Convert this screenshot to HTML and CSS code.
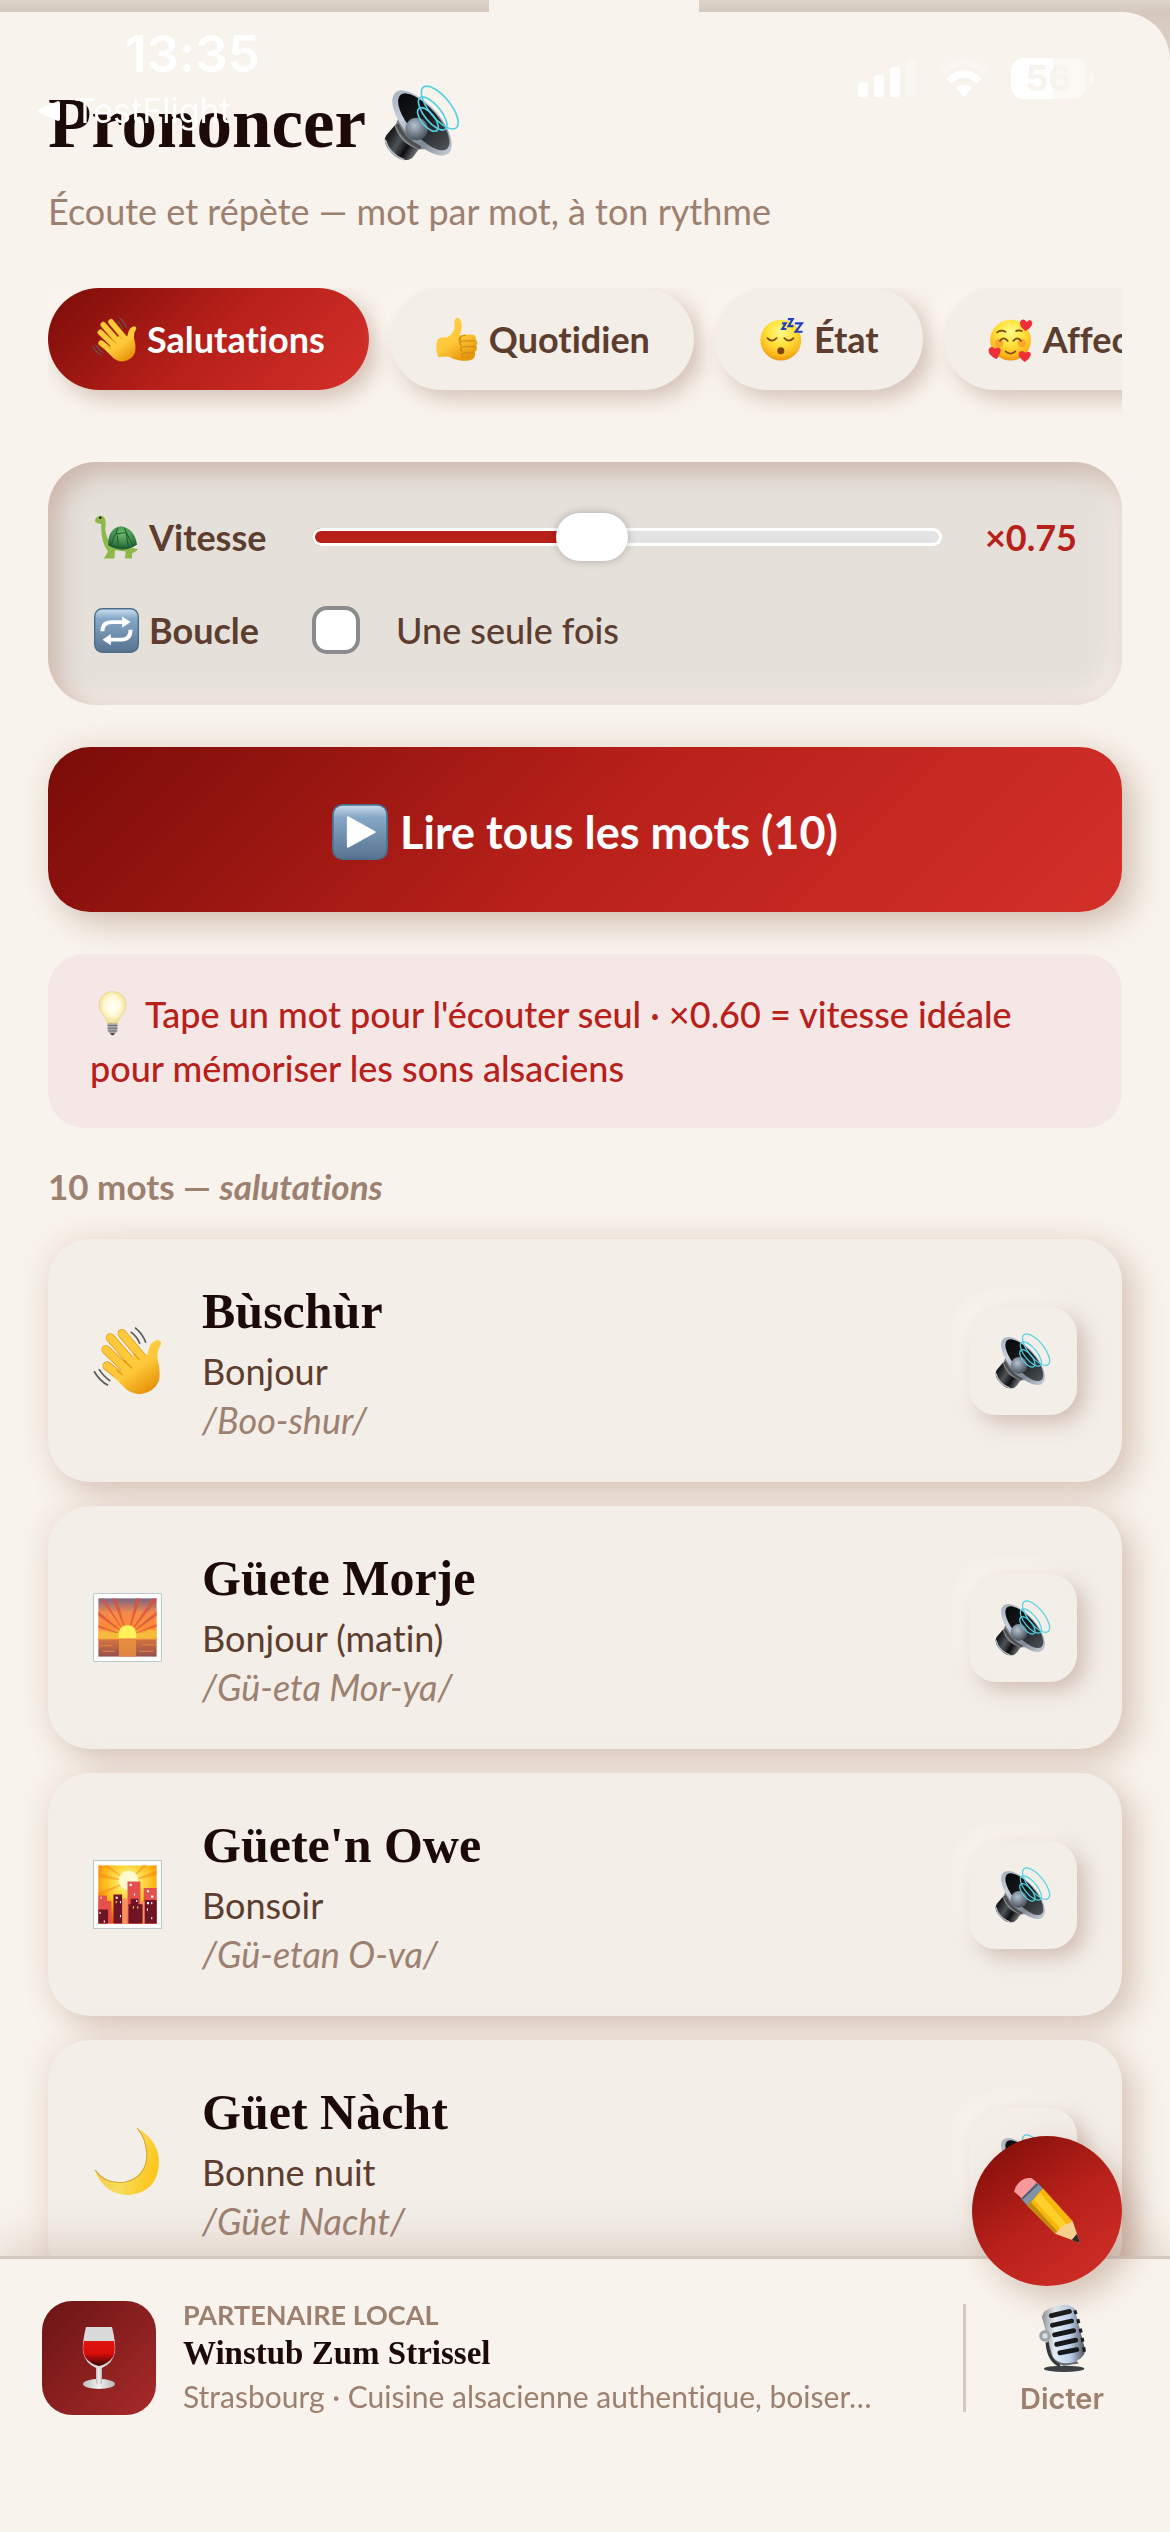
FILE: index.html
```html
<!DOCTYPE html>
<html lang="fr">
<head>
    <meta charset="UTF-8">
    <meta name="viewport" content="width=device-width, initial-scale=1.0">
    <title>Prononcer</title>
    <link rel="stylesheet" href="styles.css">
</head>
<body>
    <!-- Icon sprite -->
    <svg class="sprite" aria-hidden="true">
        <defs>
            <linearGradient id="gSkin" x1="0" y1="0" x2="0.6" y2="1">
                <stop offset="0" stop-color="#ffd04a"/><stop offset="0.6" stop-color="#ffc83a"/><stop offset="1" stop-color="#e8960c"/>
            </linearGradient>
            <radialGradient id="gFace" cx="0.5" cy="0.3" r="0.72">
                <stop offset="0" stop-color="#fffb8c"/><stop offset="0.45" stop-color="#ffe13a"/><stop offset="0.8" stop-color="#fbb81c"/><stop offset="1" stop-color="#e8900c"/>
            </radialGradient>
            <linearGradient id="gBlue" x1="0" y1="0" x2="0" y2="1">
                <stop offset="0" stop-color="#c8dcec"/><stop offset="0.22" stop-color="#86a8c8"/><stop offset="1" stop-color="#587490"/>
            </linearGradient>
            <linearGradient id="gRim" x1="0" y1="0" x2="1" y2="0">
                <stop offset="0" stop-color="#a9b4c2"/><stop offset="0.3" stop-color="#c6d0de"/><stop offset="0.7" stop-color="#7d8795"/><stop offset="1" stop-color="#c3c9d1"/>
            </linearGradient>
            <linearGradient id="gCone" x1="0" y1="0" x2="1" y2="0">
                <stop offset="0" stop-color="#08090a"/><stop offset="0.5" stop-color="#1a1c1f"/><stop offset="1" stop-color="#4c5155"/>
            </linearGradient>
            <linearGradient id="gMagnet" x1="0" y1="0" x2="1" y2="0.6">
                <stop offset="0" stop-color="#7b8085"/><stop offset="0.2" stop-color="#16181a"/><stop offset="0.5" stop-color="#4e5358"/><stop offset="0.75" stop-color="#0d0e10"/><stop offset="1" stop-color="#6b6f73"/>
            </linearGradient>
            <radialGradient id="gDome" cx="0.4" cy="0.35" r="0.65">
                <stop offset="0" stop-color="#b4c2d0"/><stop offset="1" stop-color="#4a535e"/>
            </radialGradient>
            <radialGradient id="gShell" cx="0.5" cy="0.3" r="0.7">
                <stop offset="0" stop-color="#6cc06a"/><stop offset="1" stop-color="#1f6136"/>
            </radialGradient>
            <radialGradient id="gBulb" cx="0.5" cy="0.45" r="0.6">
                <stop offset="0" stop-color="#ffffff"/><stop offset="0.5" stop-color="#fff9d6"/><stop offset="1" stop-color="#ecd778"/>
            </radialGradient>
            <linearGradient id="gDawn" x1="0" y1="0" x2="0" y2="1">
                <stop offset="0" stop-color="#7a6484"/><stop offset="0.25" stop-color="#f58a4c"/><stop offset="0.5" stop-color="#ff8a34"/><stop offset="0.66" stop-color="#f8c040"/><stop offset="0.7" stop-color="#d4743c"/><stop offset="1" stop-color="#965050"/>
            </linearGradient>
            <radialGradient id="gDusk" cx="0.52" cy="0.28" r="0.75">
                <stop offset="0" stop-color="#fffbc0"/><stop offset="0.25" stop-color="#ffe65a"/><stop offset="0.6" stop-color="#ffb414"/><stop offset="1" stop-color="#f04c10"/>
            </radialGradient>
            <linearGradient id="gMoon" x1="0" y1="0" x2="1" y2="0.3">
                <stop offset="0" stop-color="#f0c83c"/><stop offset="0.6" stop-color="#f7dc5c"/><stop offset="1" stop-color="#fcc820"/>
            </linearGradient>
            <linearGradient id="gWine" x1="0" y1="0" x2="0" y2="1">
                <stop offset="0" stop-color="#e01410"/><stop offset="0.5" stop-color="#d80c08"/><stop offset="1" stop-color="#3c0404"/>
            </linearGradient>
            <linearGradient id="gGlass" x1="0" y1="0" x2="1" y2="0">
                <stop offset="0" stop-color="#bdbdbd"/><stop offset="0.5" stop-color="#f2f2f2"/><stop offset="1" stop-color="#b4b4b4"/>
            </linearGradient>
            <linearGradient id="gSteel" x1="0" y1="0" x2="1" y2="0">
                <stop offset="0" stop-color="#8d9196"/><stop offset="0.3" stop-color="#e6edf6"/><stop offset="0.65" stop-color="#bcd0ee"/><stop offset="1" stop-color="#4c4f54"/>
            </linearGradient>
        </defs>

        <symbol id="speaker" viewBox="0 0 64 64">
            <path d="M9 34 2 42Q-1 47 3 53Q9 62 17 63Q22 64 25 60L30 53Z" fill="url(#gMagnet)"/>
            <path d="M1 46Q4 58 17 63" fill="none" stroke="#b8bcc0" stroke-width="1.5"/>
            <path d="M12 28 9 35Q14 50 29 54L46 54Z" fill="#85878a"/>
            <path d="M11 33Q17 47 31 53" fill="none" stroke="#4d4f52" stroke-width="3"/>
            <ellipse cx="32" cy="32" rx="34" ry="15" transform="rotate(49 32 32)" fill="url(#gRim)"/>
            <ellipse cx="33.500" cy="31" rx="30" ry="12" transform="rotate(49 33.500 31)" fill="url(#gCone)"/>
            <circle cx="27.500" cy="37" r="9.500" fill="url(#gDome)"/>
            <g fill="none" stroke="#52d2e4" stroke-width="1.400">
                <ellipse cx="47" cy="19" rx="22" ry="9" transform="rotate(51 47 19)"/>
                <ellipse cx="41" cy="24" rx="17" ry="7" transform="rotate(51 41 24)"/>
                <ellipse cx="37" cy="29" rx="12" ry="5.500" transform="rotate(51 37 29)"/>
            </g>
        </symbol>

        <symbol id="wave" viewBox="0 0 64 64">
            <g stroke="#e09a14" stroke-width="8.400" stroke-linecap="round">
                <path d="M13 37 32 52M12 22 34 43M16 11 38 36M27 7 48 32"/>
            </g>
            <g stroke="#ffc93c" stroke-width="7" stroke-linecap="round">
                <path d="M13 37 32 52M12 22 34 43M16 11 38 36M27 7 48 32"/>
            </g>
            <path d="M25 43 38 27 45 26Q50 31 51 24Q53 14 60 13Q65 14 62 19Q59 23 60 31Q63 43 61 51Q57 61 45 63Q38 64 31 59L19 47Z" fill="url(#gSkin)"/>
            <path d="M29 32 36 39M27 45 22 41M38 26 43 31" stroke="#e09a14" stroke-width="1.200" stroke-linecap="round"/>
            <path d="M39 1.500Q46 7 49 15.500M35 5.500Q41 10 43.500 16.500M1 42Q6 51 14 55M5.500 40Q10 47 16 51" fill="none" stroke="#5c5c5c" stroke-width="1.600"/>
        </symbol>

        <symbol id="thumb" viewBox="0 0 64 64">
            <path d="M5 32Q10 28 18 29Q27 25 29 16L29 5Q31-1 36 2Q41 7 39 17L37 26Q42 27 44 25H55Q61 27 59 32Q64 36 60 41Q63 46 58 50Q60 56 55 60Q47 64 34 61Q27 60 21 56L6 57Q1 45 5 32Z" fill="url(#gSkin)"/>
            <path d="M38 33Q35 26 45 26M39 41Q33 34 44 34H59M40 49Q34 43 43 42H60M42 57Q36 52 44 51H58M38 28Q34 31 37 36" fill="none" stroke="#d68c12" stroke-width="1.800"/>
        </symbol>

        <symbol id="sleepy" viewBox="0 0 64 64">
            <circle cx="31" cy="33" r="29" fill="url(#gFace)"/>
            <path d="M12 30Q18 37 25 30M36 30Q43 37 49 30" fill="none" stroke="#7a4510" stroke-width="2.500" stroke-linecap="round"/>
            <ellipse cx="31" cy="48" rx="5" ry="5" fill="#7a4510"/>
            <path d="M33 9H38L33 17H39M41 3H48L42 13H49M51 9H61L52 21H62" fill="none" stroke="#1f3fc4" stroke-width="3"/>
        </symbol>

        <symbol id="hearts" viewBox="0 0 64 64">
            <circle cx="32" cy="33" r="29" fill="url(#gFace)"/>
            <circle cx="16" cy="37" r="6" fill="#f77a2c" opacity="0.5"/><circle cx="48" cy="37" r="6" fill="#f77a2c" opacity="0.5"/>
            <path d="M17 34Q22 27 28 34M36 34Q42 27 47 34M25 49Q32 55 39 49M13 22Q18 17 25 21M40 20Q44 18 48 20" fill="none" stroke="#7a4510" stroke-width="2.400" stroke-linecap="round"/>
            <g fill="#ee2f38">
                <path d="M53 20Q43 12 46 6Q50 1 55 7Q61 1 63 8Q63 15 53 20Z"/>
                <path d="M12 60Q-1 53 1 46Q4 40 10 45Q17 41 18 47Q18 53 12 60Z"/>
                <path d="M52 64Q42 57 44 51Q48 46 53 51Q60 47 61 53Q60 59 52 64Z"/>
            </g>
        </symbol>

        <symbol id="turtle" viewBox="0 0 64 64">
            <path d="M3 4Q8-1 14 3Q18 7 16 19Q17 33 24 42L52 46 63 49 54 55V62H44L45 52 30 50 29 62H14L20 52Q10 40 10 13L3 11Q0 8 3 4Z" fill="#8fb84a"/>
            <path d="M20 43Q20 19 38 16Q58 19 61 42Q42 56 20 43Z" fill="url(#gShell)"/>
            <path d="M25 42Q27 32 31 27L46 25 55 43M31 27 34 18M46 25 43 18M33 29 35 46 49 46 46 27M21 41Q42 53 61 41" fill="none" stroke="#1f5c30" stroke-width="1.500"/>
            <circle cx="9" cy="4" r="1.800" fill="#222"/>
        </symbol>

        <symbol id="repeat" viewBox="0 0 64 64">
            <rect width="64" height="64" rx="12" fill="#4c6c8c"/>
            <rect x="2" y="2" width="60" height="60" rx="10" fill="url(#gBlue)"/>
            <path d="M12 33Q12 20 25 20H43M52 31Q52 45 39 45H22" fill="none" stroke="#fff" stroke-width="5.500"/>
            <path d="M40 12 52 20 40 28ZM24 37 12 45 24 53Z" fill="#fff"/>
        </symbol>

        <symbol id="play" viewBox="0 0 64 64">
            <rect width="64" height="64" rx="12" fill="#4c6c8c"/>
            <rect x="2" y="2" width="60" height="60" rx="10" fill="url(#gBlue)"/>
            <path d="M18 15 49 32 18 49Z" fill="#fff" stroke="#fff" stroke-width="2" stroke-linejoin="round"/>
        </symbol>

        <symbol id="bulb" viewBox="0 0 64 64">
            <path d="M32 1C19 1 13 10 13 20C13 32 23 36 25 46H39C41 36 51 32 51 20C51 10 45 1 32 1Z" fill="url(#gBulb)" stroke="#e6d084" stroke-width="1"/>
            <path d="M25 46H39V57L36 60H28L25 57Z" fill="#a8a8a8"/>
            <path d="M25 49H39M25 53H39M26 57H38" stroke="#6f6f6f" stroke-width="1.500"/>
            <path d="M28 60H36L33 63H31Z" fill="#333"/>
        </symbol>

        <symbol id="sunrise" viewBox="0 0 64 64">
            <rect x="0.500" y="0.500" width="63" height="63" rx="1" fill="#fff" stroke="#bcc8ca"/>
            <rect x="5" y="5" width="54" height="54" fill="url(#gDawn)"/>
            <path d="M32 40 18 5H22ZM32 40 5 17V21ZM32 40 5 30V32ZM32 40 7 5H10ZM32 40 40 5H44ZM32 40 55 5H59V7ZM32 40 59 17V21ZM32 40 59 29V31Z" fill="#d8503c" opacity="0.75"/>
            <path d="M5 36 12 35 16 37H48L52 34 59 35V43H5Z" fill="#f8bc3c"/>
            <path d="M24 42Q23 30 32 30Q41 30 40 42Z" fill="#fff25a"/>
            <rect x="24" y="43" width="16" height="16" fill="#f09440" opacity="0.8"/>
            <path d="M5 43H59M5 49H18M45 48H59M9 54H20M43 54H56" stroke="#e88440" stroke-width="1"/>
        </symbol>

        <symbol id="sunset" viewBox="0 0 64 64">
            <rect x="0.500" y="0.500" width="63" height="63" fill="#fff" stroke="#bcc8ca"/>
            <rect x="5" y="5" width="54" height="54" fill="url(#gDusk)"/>
            <path d="M33 20 5 12V16ZM33 20 10 5H14ZM33 20 46 5H50ZM33 20 5 30V34ZM33 20 59 10V14Z" fill="#f88410" opacity="0.5"/>
            <circle cx="33" cy="19" r="9" fill="#fffbd0"/>
            <path d="M5 33H13V38H17V59H5ZM32 20H44V59H32ZM47 26H59V59H47Z" fill="#e4504c"/>
            <path d="M27 36H32V59H27ZM44 38H48V59H44Z" fill="#f89060"/>
            <path d="M5 46H14V59H5ZM19 32H27V59H19ZM33 41H35V36H42V41H46V59H33ZM48 37H59V59H48Z" fill="#6e1424"/>
            <path d="M21 34H23V36H21ZM25 38H26V40H25ZM34 22H36V24H34ZM38 31H39V33H38ZM40 37H41V39H40ZM50 28H52V30H50ZM50 39H52V41H50ZM54 33H56V35H54ZM54 39H55V41H54ZM50 45H51V47H50ZM54 53H55V55H54ZM6 48H7V50H6ZM25 51H26V53H25ZM10 56H11V58H10ZM7 34H8V36H7Z" fill="#fff"/>
            <path d="M37 43H38V45H37ZM41 43H42V45H41ZM21 38H22V40H21Z" fill="#ffe040"/>
        </symbol>

        <symbol id="moon" viewBox="0 0 64 64">
            <path d="M41 1Q63 14 61 36Q59 60 34 63Q10 63 2 40Q12 54 30 51Q50 46 50 25Q49 10 41 1Z" fill="url(#gMoon)"/>
            <path d="M2 40Q12 54 30 51Q50 46 50 25Q49 10 41 1" fill="none" stroke="#dba52c" stroke-width="1"/>
        </symbol>

        <symbol id="pencil" viewBox="0 0 64 64">
            <path d="M2 8Q8-1 17 0L22 4 8 20 0 13Z" fill="#f79a9e"/>
            <path d="M22 4 28 10 13 27 7 20Z" fill="#7f93a8"/>
            <path d="M8 20 23 6" stroke="#4c5560" stroke-width="1.500"/>
            <path d="M28 10 57 42 46 55 40 54 13 27Z" fill="#f9b60c"/>
            <path d="M25 14 52 46 46 50 19 21Z" fill="#ffd02c"/>
            <path d="M16 23 44 54 40 54 13 27Z" fill="#c08a10"/>
            <path d="M57 42 64 63 40 54 46 47Z" fill="#f6d08c"/>
            <path d="M61 54 64 63 56 60Z" fill="#2a2a2e"/>
        </symbol>

        <symbol id="wine" viewBox="0 0 64 64">
            <ellipse cx="32" cy="58" rx="16" ry="5" fill="url(#gGlass)"/>
            <path d="M29 41H35V57Q32 60 29 57Z" fill="url(#gGlass)"/>
            <path d="M19 1H45Q49 17 48 26Q46 37 35 42H29Q18 37 16 26Q15 17 19 1Z" fill="#dadada"/>
            <path d="M17 15H47Q49 24 46 31Q41 38 32 40Q23 38 18 31Q15 24 17 15Z" fill="url(#gWine)"/>
        </symbol>

        <symbol id="mic" viewBox="0 0 64 64">
            <ellipse cx="34" cy="61" rx="19" ry="3" fill="#3c3f43"/>
            <path d="M18 32Q20 55 34 58L48 56 40 48Z" fill="#6b6e72"/>
            <path d="M13 12Q14 5 26 2Q40-1 44 5L54 44Q52 52 42 55Q28 58 23 49Z" fill="url(#gSteel)"/>
            <path d="M44 6Q50 22 53 45" stroke="#1c1e20" stroke-width="3" stroke-dasharray="4 5" fill="none"/>
            <g stroke="#17181a" stroke-width="4.500" stroke-linecap="round">
                <path d="M22 11 39 7M23 20 41 16M25 29 43 25M27 38 45 34M30 46 46 43"/>
            </g>
            <circle cx="16" cy="30" r="5.500" fill="#9fa4aa"/><circle cx="16" cy="30" r="2.500" fill="#d8dee6"/>
            <path d="M18 36Q19 53 30 58" stroke="#34373a" stroke-width="3" fill="none"/>
        </symbol>
    </svg>

    <div class="app">
        <div class="notch"></div>

        <div class="status-bar">
            <div class="status-left">
                <span class="clock">13:35</span>
                <span class="back-app">
                    <svg class="back-arrow" viewBox="0 0 22 20"><path d="M20 0Q22 0 22 2V18Q22 20 20 20L1 11.500Q-1 10 1 8.500Z" fill="#fff"/></svg>
                    TestFlight
                </span>
            </div>
            <div class="status-right">
                <svg class="signal" viewBox="0 0 60 40" fill="#fff">
                    <rect x="0" y="24" width="10" height="15" rx="3"/>
                    <rect x="16" y="17" width="10" height="22" rx="3"/>
                    <rect x="32" y="9" width="10" height="30" rx="3"/>
                    <rect x="48" y="1" width="10" height="38" rx="3" opacity="0.3"/>
                </svg>
                <svg class="wifi" viewBox="0 0 50 40">
                    <path d="M3 14Q25-6 47 14" fill="none" stroke="#fff" stroke-width="7" opacity="0.3"/>
                    <path d="M10 23Q25 9 40 23" fill="none" stroke="#fff" stroke-width="7"/>
                    <path d="M17 30Q25 23 33 30L25 39Z" fill="#fff"/>
                </svg>
                <span class="battery">56</span>
            </div>
        </div>

        <main class="sheet">
            <h1>Prononcer <svg class="title-icon"><use href="#speaker"/></svg></h1>
            <p class="subtitle">Écoute et répète — mot par mot, à ton rythme</p>

            <div class="chips">
                <button class="chip active"><svg class="icon"><use href="#wave"/></svg>Salutations</button>
                <button class="chip"><svg class="icon"><use href="#thumb"/></svg>Quotidien</button>
                <button class="chip"><svg class="icon"><use href="#sleepy"/></svg>État</button>
                <button class="chip"><svg class="icon"><use href="#hearts"/></svg>Affection</button>
            </div>

            <section class="settings">
                <div class="setting-row">
                    <label class="setting-label" for="speed"><svg class="icon"><use href="#turtle"/></svg>Vitesse</label>
                    <input type="range" id="speed" min="0.4" max="1.2" step="0.05" value="0.75">
                    <span class="speed-value">×0.75</span>
                </div>
                <div class="setting-row">
                    <label class="setting-label" for="loop"><svg class="icon"><use href="#repeat"/></svg>Boucle</label>
                    <input type="checkbox" id="loop">
                    <span class="loop-text">Une seule fois</span>
                </div>
            </section>

            <button class="play-all"><svg class="play-icon"><use href="#play"/></svg>Lire tous les mots (10)</button>

            <p class="tip"><svg class="icon"><use href="#bulb"/></svg>Tape un mot pour l'écouter seul · ×0.60 = vitesse idéale pour mémoriser les sons alsaciens</p>

            <h2>10 mots — <em>salutations</em></h2>

            <ul class="words">
                <li class="word">
                    <svg class="word-icon"><use href="#wave"/></svg>
                    <div class="word-text">
                        <h3>Bùschùr</h3>
                        <p class="translation">Bonjour</p>
                        <p class="phonetic">/Boo-shur/</p>
                    </div>
                    <button class="listen" aria-label="Écouter Bùschùr"><svg><use href="#speaker"/></svg></button>
                </li>
                <li class="word">
                    <svg class="word-icon"><use href="#sunrise"/></svg>
                    <div class="word-text">
                        <h3>Güete Morje</h3>
                        <p class="translation">Bonjour (matin)</p>
                        <p class="phonetic">/Gü-eta Mor-ya/</p>
                    </div>
                    <button class="listen" aria-label="Écouter Güete Morje"><svg><use href="#speaker"/></svg></button>
                </li>
                <li class="word">
                    <svg class="word-icon"><use href="#sunset"/></svg>
                    <div class="word-text">
                        <h3>Güete'n Owe</h3>
                        <p class="translation">Bonsoir</p>
                        <p class="phonetic">/Gü-etan O-va/</p>
                    </div>
                    <button class="listen" aria-label="Écouter Güete'n Owe"><svg><use href="#speaker"/></svg></button>
                </li>
                <li class="word">
                    <svg class="word-icon"><use href="#moon"/></svg>
                    <div class="word-text">
                        <h3>Güet Nàcht</h3>
                        <p class="translation">Bonne nuit</p>
                        <p class="phonetic">/Güet Nacht/</p>
                    </div>
                    <button class="listen" aria-label="Écouter Güet Nàcht"><svg><use href="#speaker"/></svg></button>
                </li>
            </ul>
        </main>

        <footer class="bottom-bar">
            <button class="fab" aria-label="Écrire"><svg><use href="#pencil"/></svg></button>
            <a class="partner" href="#partenaire">
                <span class="partner-logo"><svg><use href="#wine"/></svg></span>
                <span class="partner-text">
                    <span class="partner-tag">PARTENAIRE LOCAL</span>
                    <span class="partner-name">Winstub Zum Strissel</span>
                    <span class="partner-desc">Strasbourg · Cuisine alsacienne authentique, boiser…</span>
                </span>
            </a>
            <button class="dictate"><svg><use href="#mic"/></svg>Dicter</button>
        </footer>
    </div>
</body>
</html>
```
FILE: styles.css
```css
* {
    box-sizing: border-box;
}
body {
    margin: 0;
    font-family: Lato, "Open Sans", sans-serif;
    font-size: 36px;
    font-variant-ligatures: none;
    color: #5c3d2e;
    background-color: #f8f3ec;
}
h1, h2, h3, p, ul {
    margin: 0;
    padding: 0;
}
button {
    font-family: inherit;
    font-variant-ligatures: inherit;
    border: none;
    cursor: pointer;
}
.sprite {
    position: absolute;
    width: 0;
    height: 0;
}
.app {
    position: relative;
    display: flex;
    flex-direction: column;
    height: 100vh;
    padding-top: 12px;
    overflow: hidden;
    background: linear-gradient(to bottom, #dfd4cb 0, #d5c8be 12px, #ddd3cc 60px);
}

/* Phone status bar, floats over the sheet */
.notch {
    position: absolute;
    top: 0;
    left: 489px;
    width: 210px;
    height: 12px;
    background-color: #f8f3ec;
}
.status-bar {
    position: absolute;
    top: 24px;
    left: 38px;
    right: 76px;
    z-index: 2;
    display: flex;
    justify-content: space-between;
    color: #fff;
    font-family: Inter, sans-serif;
    pointer-events: none;
}
.status-left {
    display: flex;
    flex-direction: column;
}
.clock {
    padding-left: 87px;
    font-size: 51px;
    line-height: 60px;
    font-weight: 600;
}
.back-app {
    display: flex;
    align-items: center;
    gap: 14px;
    font-size: 34px;
    line-height: 54px;
}
.back-arrow {
    width: 22px;
    height: 20px;
}
.status-right {
    display: flex;
    align-items: center;
    height: 42px;
    margin-top: 33px;
}
.signal {
    width: 60px;
    height: 40px;
    margin-right: 21px;
}
.wifi {
    width: 50px;
    height: 40px;
    margin-right: 22px;
}
.battery {
    position: relative;
    width: 75px;
    height: 41px;
    margin-right: 8px;
    border-radius: 13px;
    background: linear-gradient(to right, #fff 56%, #fbf9f4 56%);
    color: #f8f3ec;
    font-size: 36px;
    line-height: 41px;
    font-weight: 700;
    text-align: center;
}
.battery::after {
    content: "";
    position: absolute;
    top: 14px;
    right: -8px;
    width: 5px;
    height: 13px;
    border-radius: 0 5px 5px 0;
    background-color: #fbf9f4;
}

.sheet {
    flex: 1;
    min-height: 0;
    padding: 71px 48px 24px;
    overflow-y: auto;
    scrollbar-width: none;
    background-color: #f8f3ec;
    border-top-right-radius: 48px;
}
h1 {
    display: flex;
    align-items: center;
    gap: 18px;
    font-family: "Liberation Serif", serif;
    font-size: 71px;
    line-height: 80px;
    font-weight: 700;
    color: #1c0a08;
}
.title-icon {
    width: 76px;
    height: 76px;
}
.subtitle {
    margin-top: 24px;
    line-height: 48px;
    color: #9c8070;
}
.icon {
    flex: none;
    width: 45px;
    height: 45px;
    margin-right: 10px;
}

/* Category chips */
.chips {
    display: flex;
    gap: 21px;
    margin-top: 53px;
    padding-bottom: 28px;
    overflow: hidden;
}
.chip {
    flex: none;
    display: flex;
    align-items: center;
    height: 102px;
    padding: 0 44px;
    border-radius: 51px;
    background-color: #f3eee8;
    color: #5c3d2e;
    font-size: 36px;
    font-weight: 700;
    box-shadow: 8px 8px 20px rgba(160, 120, 105, 0.4), -8px -8px 20px rgba(255, 250, 245, 0.7);
}
.chip.active {
    background: linear-gradient(135deg, #7a0c08 0%, #b8201a 50%, #d4302a 100%);
    color: #fff;
}

/* Speed and loop settings */
.settings {
    display: flex;
    flex-direction: column;
    gap: 27px;
    margin-top: 44px;
    padding: 42px;
    border-radius: 48px;
    background-color: #e5e0da;
    box-shadow: inset 9px 9px 24px rgba(175, 135, 120, 0.5), inset -9px -9px 24px rgba(255, 243, 238, 0.7);
}
.setting-row {
    display: flex;
    align-items: center;
    height: 66px;
}
.setting-label {
    display: flex;
    align-items: center;
    width: 222px;
    padding-left: 4px;
    font-weight: 700;
}
#speed {
    flex: 1;
    min-width: 0;
    height: 18px;
    margin: 0;
    appearance: none;
    border-radius: 9px;
    background: linear-gradient(to right, #b8201a 45%, #e3e3e4 45%);
    box-shadow: inset 0 0 0 3px #fff;
}
#speed::-webkit-slider-thumb {
    appearance: none;
    width: 72px;
    height: 48px;
    border-radius: 24px;
    background-color: #fff;
    box-shadow: 0 0 9px rgba(0, 0, 0, 0.25);
}
.speed-value {
    width: 138px;
    padding-right: 3px;
    text-align: right;
    font-weight: 700;
    color: #b8201a;
}
#loop {
    width: 48px;
    height: 48px;
    margin: 0 36px 0 0;
    appearance: none;
    border: 4px solid #8a8a8f;
    border-radius: 15px;
    background-color: #fff;
}
.loop-text {
    font-weight: 500;
}

.play-all {
    display: flex;
    align-items: center;
    justify-content: center;
    gap: 12px;
    width: 100%;
    height: 165px;
    margin-top: 42px;
    padding-top: 6px;
    border-radius: 42px;
    background: linear-gradient(135deg, #7a0c08 0%, #b8201a 50%, #d4302a 100%);
    color: #fff;
    font-size: 45px;
    font-weight: 700;
    box-shadow: 12px 12px 30px rgba(160, 120, 100, 0.4), -6px -6px 24px rgba(230, 210, 200, 0.25);
}
.play-icon {
    width: 56px;
    height: 56px;
}
.tip {
    margin-top: 42px;
    padding: 33px 42px;
    border-radius: 36px;
    background-color: #f5e7e6;
    color: #b8201a;
    line-height: 54px;
    font-weight: 500;
}
.tip .icon {
    vertical-align: -8px;
}
h2 {
    margin-top: 36px;
    font-size: 35px;
    line-height: 45px;
    font-weight: 700;
    color: #9c8070;
}

/* Word list */
.words {
    display: flex;
    flex-direction: column;
    gap: 24px;
    margin-top: 30px;
    list-style: none;
}
.word {
    display: flex;
    align-items: center;
    padding: 39px 45px;
    border-radius: 42px;
    background-color: #f3eee8;
    box-shadow: 12px 12px 30px rgba(160, 120, 100, 0.35), -6px -6px 24px rgba(235, 205, 195, 0.25);
}
.word-icon {
    width: 69px;
    height: 69px;
    margin-right: 40px;
}
.word-text {
    flex: 1;
}
.word h3 {
    font-family: "Liberation Serif", serif;
    font-size: 50px;
    line-height: 66px;
    font-weight: 700;
    color: #1c0a08;
}
.translation {
    line-height: 54px;
}
.phonetic {
    font-size: 36px;
    line-height: 45px;
    font-style: italic;
    color: #9c8070;
}
.listen {
    display: flex;
    align-items: center;
    justify-content: center;
    width: 108px;
    height: 108px;
    padding: 0;
    border-radius: 27px;
    background-color: #f3eee8;
    box-shadow: 8px 8px 20px rgba(160, 120, 105, 0.4), -8px -8px 20px rgba(255, 250, 243, 0.7);
}
.listen svg {
    width: 56px;
    height: 56px;
}

/* Bottom bar */
.bottom-bar {
    position: relative;
    display: flex;
    align-items: center;
    gap: 24px;
    padding: 41px 12px 116px 42px;
    border-top: 3px solid #d6cac0;
    background-color: #f8f3ec;
    box-shadow: 0 -12px 36px rgba(160, 120, 105, 0.25);
}
.fab {
    position: absolute;
    top: -123px;
    right: 48px;
    display: flex;
    align-items: center;
    justify-content: center;
    width: 150px;
    height: 150px;
    border-radius: 50%;
    background: linear-gradient(145deg, #7a0c08 0%, #b8201a 50%, #d4302a 100%);
    box-shadow: 12px 12px 30px rgba(160, 120, 100, 0.4);
}
.fab svg {
    width: 66px;
    height: 66px;
}
.partner {
    flex: 1;
    min-width: 0;
    display: flex;
    align-items: center;
    gap: 27px;
    color: inherit;
    text-decoration: none;
}
.partner-logo {
    flex: none;
    display: flex;
    align-items: center;
    justify-content: center;
    width: 114px;
    height: 114px;
    border-radius: 30px;
    background: linear-gradient(135deg, #6b1414, #a82a2a);
}
.partner-logo svg {
    width: 64px;
    height: 64px;
}
.partner-text {
    display: flex;
    flex-direction: column;
    min-width: 0;
    white-space: nowrap;
}
.partner-tag {
    font-size: 27px;
    line-height: 30px;
    font-weight: 700;
    color: #9c8070;
}
.partner-name {
    font-family: "Liberation Serif", serif;
    font-size: 33px;
    line-height: 46px;
    font-weight: 700;
    color: #1c0a08;
}
.partner-desc {
    font-size: 30px;
    line-height: 40px;
    color: #9c8070;
}
.dictate {
    display: flex;
    flex-direction: column;
    align-items: center;
    justify-content: space-between;
    width: 195px;
    height: 108px;
    padding: 0;
    border-left: 3px solid #d6cac0;
    background: none;
    color: #9c8070;
    font-family: Inter, sans-serif;
    font-size: 29px;
    line-height: 26px;
    font-weight: 600;
}
.dictate svg {
    width: 68px;
    height: 68px;
}
```
